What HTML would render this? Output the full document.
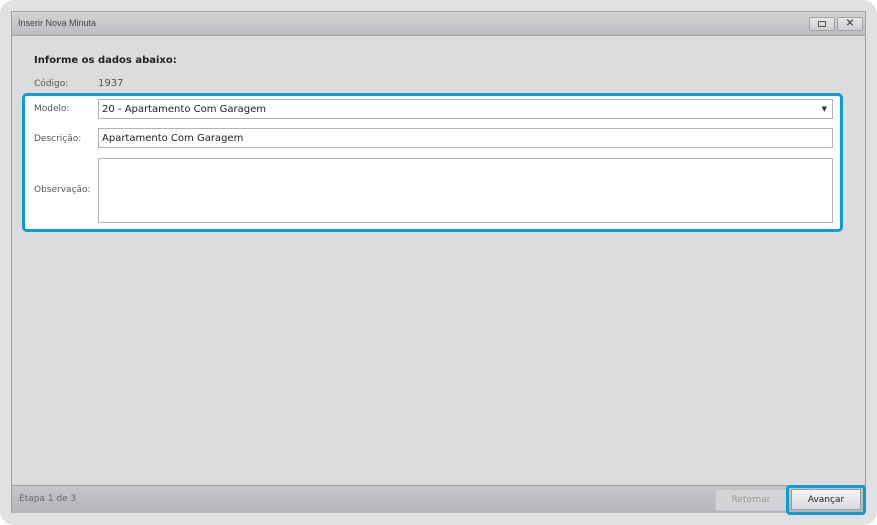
<!DOCTYPE html><html><head><style>
body{margin:0;width:877px;height:525px;background:#fff;font-family:"DejaVu Sans","Liberation Sans",sans-serif;position:relative;overflow:hidden}
.a{position:absolute}
.outer{left:0;top:0;width:877px;height:525px;background:#e1e1e1;border-radius:14px}
.win{left:11px;top:11px;width:853px;height:500px;background:#dcdcdc;border:1px solid #a4a4a8}
.title{left:0;top:0;width:853px;height:23px;background:linear-gradient(#d4d4d6,#bdbdc1);border-bottom:1px solid #a0a0a5;font-size:9px;color:#444;line-height:22px;text-indent:6px;font-family:"Liberation Sans",sans-serif}
.tb{top:5px;width:24px;height:12px;border:1px solid #a2a2a6;border-radius:2px;background:linear-gradient(#e8e8ea,#cfcfd2)}
.lbl{font-size:9px;color:#555}
.inp{background:#fff;border:1px solid #b4b4b8;font-size:10px;color:#222;line-height:19px;text-indent:3px}
.foot{left:0;top:473px;width:853px;height:27px;background:linear-gradient(#c6c6ca,#b4b4b9);border-top:1px solid #9d9da2}
</style></head><body>
<div class="a outer"></div>
<div class="a win">
<div class="a title">Inserir Nova Minuta
<div class="a tb" style="left:797px"><div class="a" style="left:8px;top:3px;width:6px;height:4px;border:1px solid #555"></div></div>
<div class="a tb" style="left:825px;font-size:10px;font-weight:bold;color:#555;text-indent:0;text-align:center;line-height:12px">✕</div>
</div>
<div class="a" style="left:22px;top:43px;font-size:10px;font-weight:bold;color:#222">Informe os dados abaixo:</div>
<div class="a lbl" style="left:22px;top:67px">Código:</div>
<div class="a lbl" style="left:86px;top:66px;font-size:10px">1937</div>
<div class="a" style="left:10px;top:81px;width:815px;height:133px;border:3px solid #0d9bd0;border-radius:5px;background:#fff"></div>
<div class="a lbl" style="left:22px;top:92px">Modelo:</div>
<div class="a inp" style="left:86px;top:87px;width:733px;height:18px">20 - Apartamento Com Garagem<span class="a" style="right:5px;top:0;font-size:7px;color:#333">▼</span></div>
<div class="a lbl" style="left:22px;top:122px">Descrição:</div>
<div class="a inp" style="left:86px;top:116px;width:733px;height:18px">Apartamento Com Garagem</div>
<div class="a lbl" style="left:22px;top:173px">Observação:</div>
<div class="a inp" style="left:86px;top:146px;width:733px;height:63px"></div>
<div class="a foot">
<div class="a" style="left:7px;top:8px;font-size:9px;color:#666">Etapa 1 de 3</div>
<div class="a" style="left:703px;top:3px;width:70px;height:20px;background:#d4d4d6;border:1px solid #c4c4c8;font-size:9px;color:#999;text-align:center;line-height:20px">Retornar</div>
<div class="a" style="left:774px;top:-1px;width:80px;height:30px;border:3px solid #0d9bd0;border-radius:4px;box-sizing:border-box"></div>
<div class="a" style="left:779px;top:3px;width:70px;height:21px;background:linear-gradient(#f4f4f6,#dadade);border:1px solid #9a9aa0;font-size:9px;color:#222;text-align:center;line-height:20px;box-sizing:border-box">Avançar</div>
</div>
</div>
</body></html>
